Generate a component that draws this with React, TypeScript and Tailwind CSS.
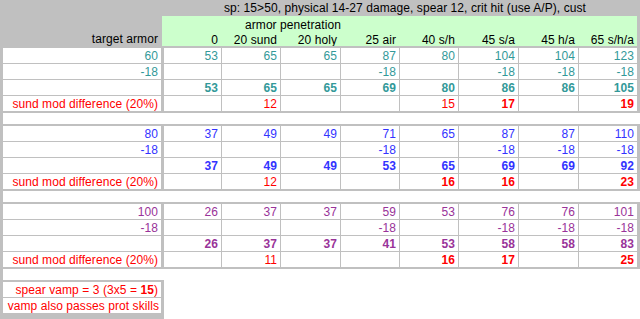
import React from "react";

type Cell = string | { t: string; b: true };

const widths = ["w-[57px]", "w-[58px]", "w-[59px]", "w-[58px]", "w-[58px]", "w-[59px]", "w-[59px]", "w-[58px]"];
const heads = ["0", "20 sund", "20 holy", "25 air", "40 s/h", "45 s/a", "45 h/a", "65 s/h/a"];

interface BlockData {
  color: string;
  armor: string;
  base: Cell[];
  totals: Cell[];
  diff: Cell[];
}

const blocks: BlockData[] = [
  {
    color: "text-[#339999]",
    armor: "60",
    base: ["53", "65", "65", "87", "80", "104", "104", "123"],
    totals: ["53", "65", "65", "69", "80", "86", "86", "105"],
    diff: ["", "12", "", "", "15", { t: "17", b: true }, "", { t: "19", b: true }],
  },
  {
    color: "text-[#3333ff]",
    armor: "80",
    base: ["37", "49", "49", "71", "65", "87", "87", "110"],
    totals: ["37", "49", "49", "53", "65", "69", "69", "92"],
    diff: ["", "12", "", "", { t: "16", b: true }, { t: "16", b: true }, "", { t: "23", b: true }],
  },
  {
    color: "text-[#993399]",
    armor: "100",
    base: ["26", "37", "37", "59", "53", "76", "76", "101"],
    totals: ["26", "37", "37", "41", "53", "58", "58", "83"],
    diff: ["", "11", "", "", { t: "16", b: true }, { t: "17", b: true }, "", { t: "25", b: true }],
  },
];

const mods = ["", "", "", "-18", "", "-18", "-18", "-18"];

const Row = ({ label, cells, color, bold, labelColor }: { label: React.ReactNode; cells: Cell[]; color: string; bold?: boolean; labelColor?: string }) => (
  <div className="flex h-[15px] gap-px">
    <div className={`w-[158px] mr-[2px] bg-white text-right pr-[3px] whitespace-nowrap ${labelColor ?? color}`}>{label}</div>
    {cells.map((c, i) => {
      const text = typeof c === "string" ? c : c.t;
      const b = bold || typeof c !== "string";
      return (
        <div key={i} className={`${widths[i]} bg-white text-right pr-[3px] ${color} ${b ? "font-bold" : ""}`}>
          {text}
        </div>
      );
    })}
  </div>
);

const Block = ({ d }: { d: BlockData }) => (
  <div className="flex flex-col gap-px bg-[#c0c0c0] px-[3px] py-[2px]">
    <Row label={d.armor} cells={d.base} color={d.color} />
    <Row label="-18" cells={mods} color={d.color} />
    <Row label="" cells={d.totals} color={d.color} bold />
    <Row label="sund mod difference (20%)" cells={d.diff} color="text-[#ff0000]" />
  </div>
);

const Gap = () => (
  <div className="flex h-[11px]">
    <div className="w-[3px] bg-[#c0c0c0]" />
    <div className="flex-1 bg-white" />
  </div>
);

export default function App() {
  return (
    <div className="w-[640px] h-[319px] overflow-hidden bg-white flex flex-col font-['Liberation_Sans',Arial,sans-serif] text-[12px] leading-[17px] tracking-[0.07px] text-black">
      <div className="h-[16px] bg-[#c0c0c0] pl-[224px] whitespace-nowrap">
        sp: 15&gt;50, physical 14-27 damage, spear 12, crit hit (use A/P), cust
      </div>
      <div className="flex h-[30px] bg-[#c0c0c0]">
        <div className="w-[162px] flex items-end justify-end pr-[4px]">
          <span className="h-[15px]">target armor</span>
        </div>
        <div className="w-[475px] bg-[#ccffcc] flex flex-col pt-px">
          <div className="h-[15px] pl-[83px]">armor penetration</div>
          <div className="flex h-[14px] pl-[2px]">
            {heads.map((h, i) => (
              <div key={h} className={`${widths[i]} ${i ? "ml-px" : ""} text-right pr-[3px] whitespace-nowrap`}>
                {h}
              </div>
            ))}
          </div>
        </div>
      </div>
      <Block d={blocks[0]} />
      <Gap />
      <Block d={blocks[1]} />
      <Gap />
      <Block d={blocks[2]} />
      <Gap />
      <div className="flex flex-1">
        <div className="w-[164px] bg-[#c0c0c0] px-[3px] py-[2px] flex flex-col gap-px">
          <div className="w-[158px] h-[15px] bg-white text-right pr-[3px] text-[#ff0000] whitespace-nowrap">
            spear vamp = 3 (3x5 = <b>15</b>)
          </div>
          <div className="w-[158px] h-[15px] bg-white text-right pr-[2px] text-[#ff0000] whitespace-nowrap">
            vamp also passes prot skills
          </div>
        </div>
        <div className="flex-1 bg-white" />
      </div>
    </div>
  );
}
